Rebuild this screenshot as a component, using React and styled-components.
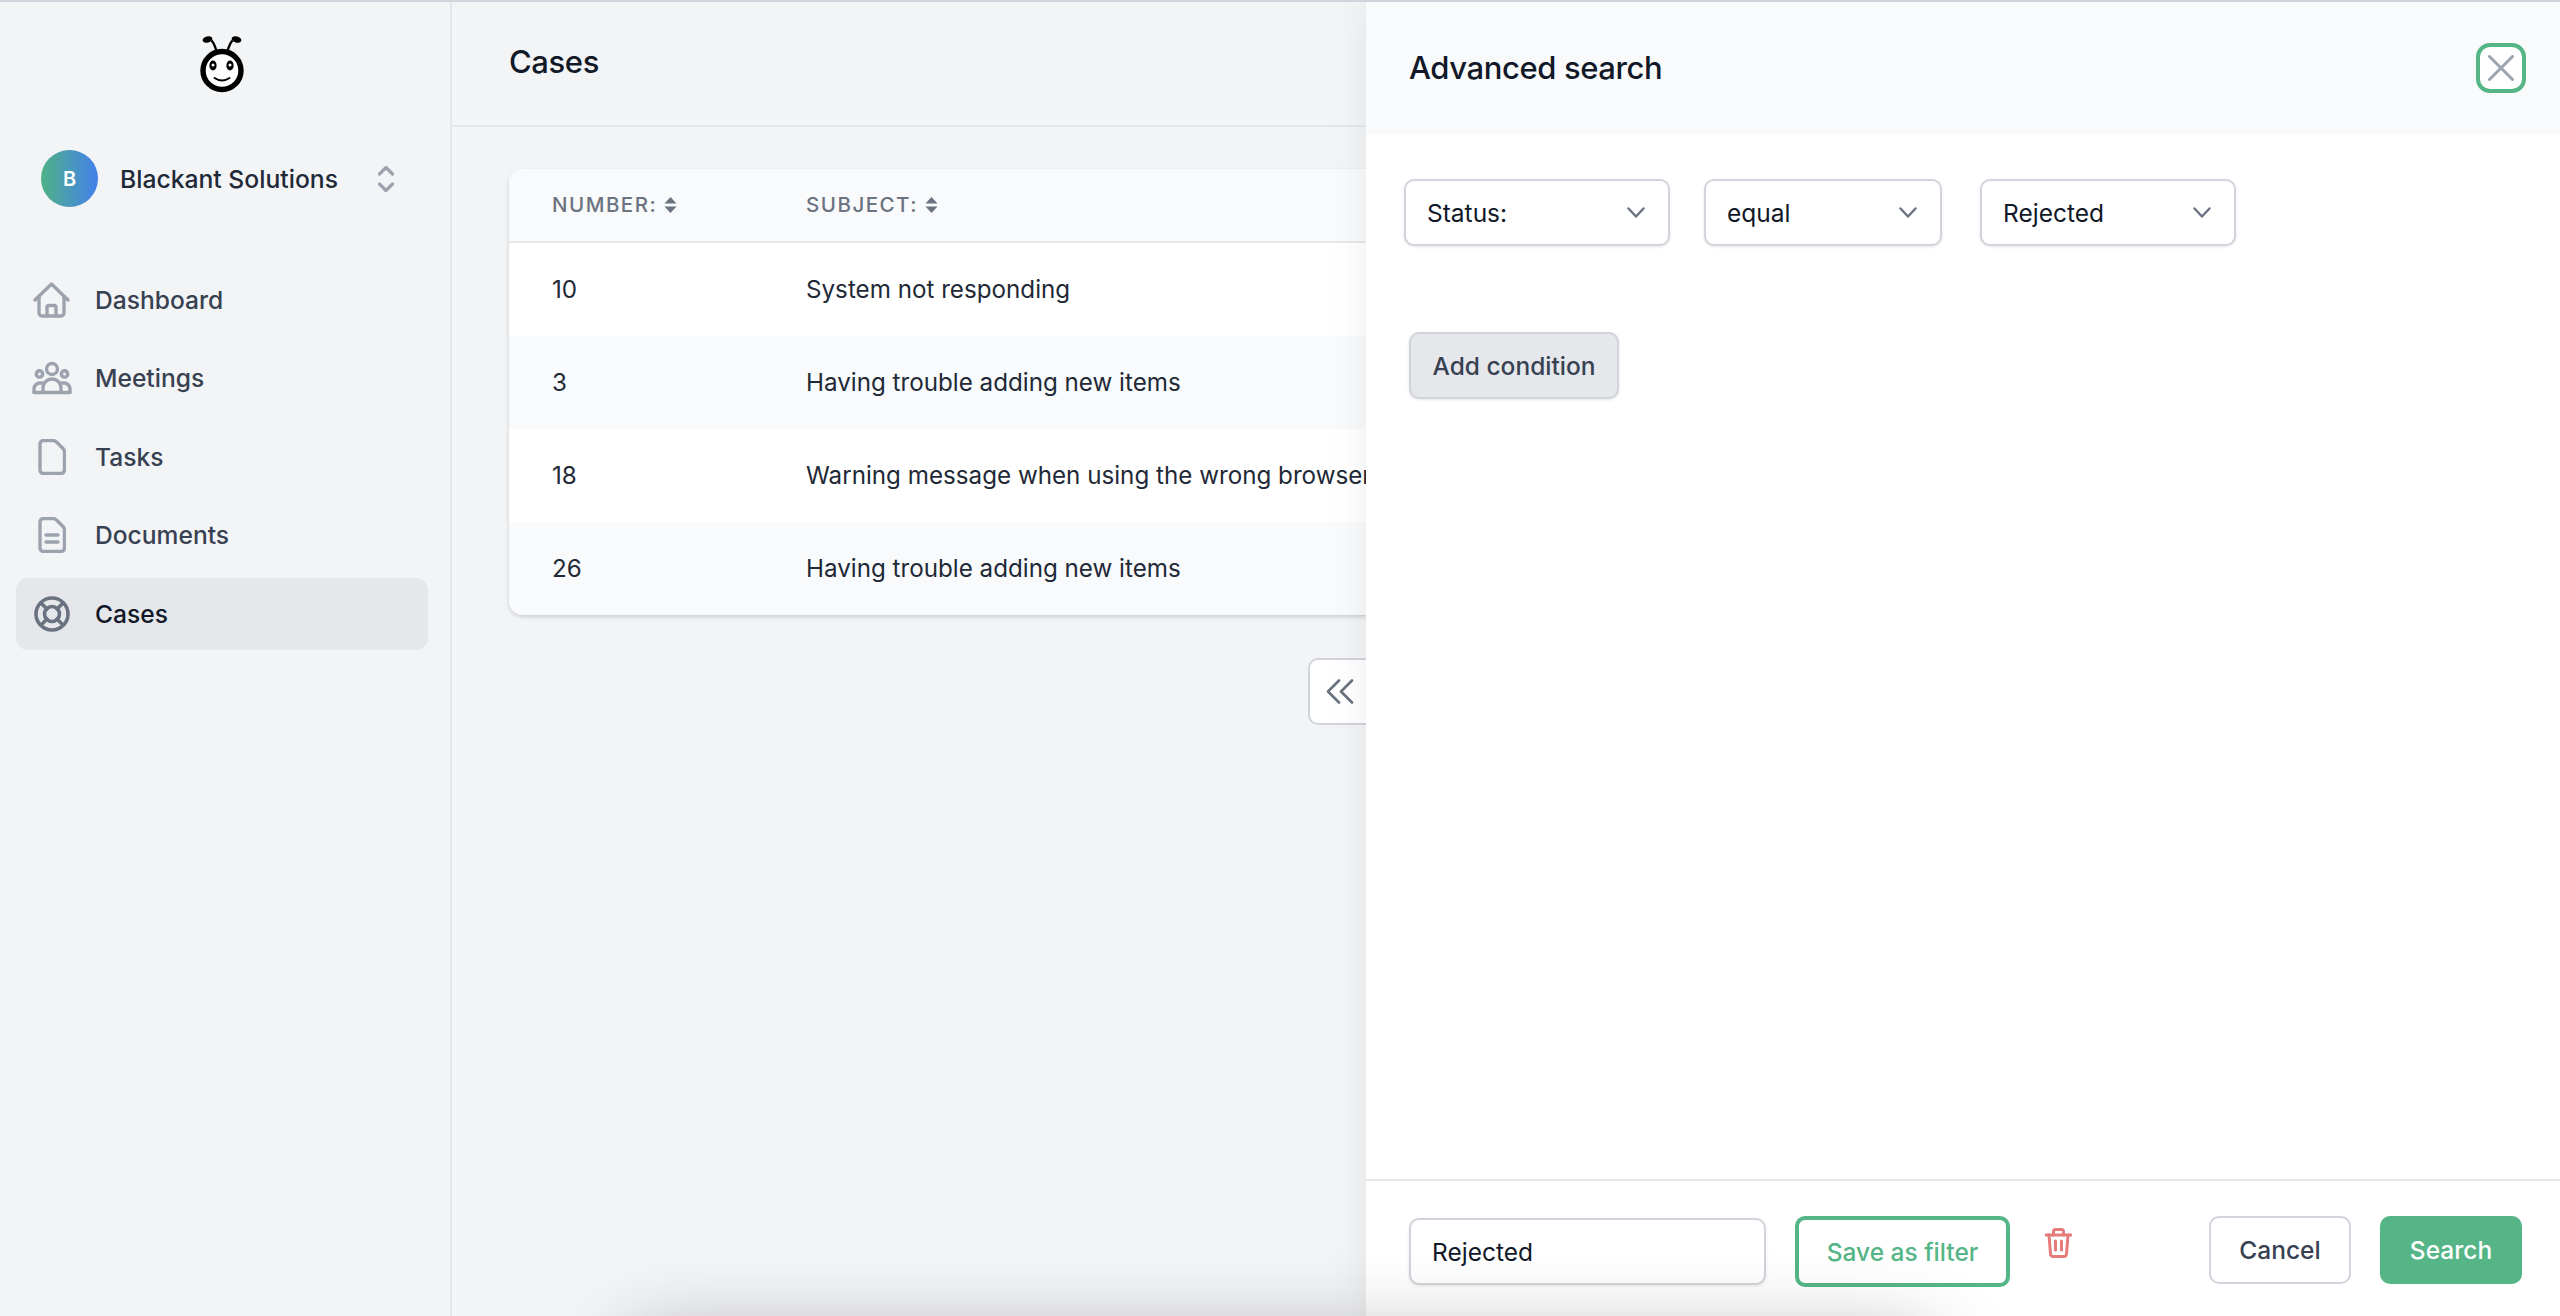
import React from 'react'
import styled, { createGlobalStyle } from 'styled-components'

const Global = createGlobalStyle`
  html, body { margin: 0; padding: 0; height: 100%; }
  body { font-family: Inter, "Liberation Sans", sans-serif; background: #f3f4f6; color: #111827; }
  #root { height: 100%; }
  * { box-sizing: border-box; }
`

const Page = styled.div`
  position: relative;
  display: flex;
  height: 1316px;
  overflow: hidden;
  border-top: 2px solid #d1d5db;
  background: #f3f4f6;
`
const Sidebar = styled.aside`
  width: 452px;
  flex: none;
  padding: 32px 22px 0 16px;
  border-right: 2px solid #e5e7eb;
`
const LogoWrap = styled.div`
  display: flex;
  justify-content: center;
`
const Org = styled.div`
  display: flex;
  align-items: center;
  height: 57px;
  margin-top: 57px;
  padding-left: 25px;
`
const Avatar = styled.div`
  width: 57px;
  height: 57px;
  border-radius: 50%;
  display: flex;
  align-items: center;
  justify-content: center;
  background: linear-gradient(90deg, #4fb286, #4380ec);
  color: #fff;
  font-size: 20px;
  font-weight: 600;
`
const OrgName = styled.span`
  margin-left: 22px;
  font-size: 24.7px;
  font-weight: 500;
  color: #1f2937;
`
const OrgToggle = styled.svg`
  margin-left: 40px;
  color: #9ca3af;
`
const Nav = styled.nav`
  display: flex;
  flex-direction: column;
  gap: 6.4px;
  margin-top: 57px;
`
const NavItem = styled.a`
  display: flex;
  align-items: center;
  height: 72px;
  border-radius: 12px;
  font-size: 24.6px;
  font-weight: 500;
  color: ${p => (p.$active ? '#111827' : '#374151')};
  background: ${p => (p.$active ? '#e5e7eb' : 'transparent')};
`
const NavIconBox = styled.span`
  display: flex;
  justify-content: center;
  width: 79px;
  flex: none;
  padding-right: 8px;
  color: ${p => (p.$active ? '#6b7280' : '#9ca3af')};
`
const Main = styled.main`
  flex: 1;
  min-width: 0;
`
const MainHeader = styled.header`
  height: 125px;
  padding: 0 0 4px 57px;
  display: flex;
  align-items: center;
  border-bottom: 2px solid #e5e7eb;
`
const Title = styled.h1`
  margin: 0;
  font-size: 31px;
  font-weight: 500;
  letter-spacing: -0.4px;
  color: #111827;
`
const Table = styled.div`
  margin: 42px 50px 0 57px;
  border-radius: 14px;
  overflow: hidden;
  background: #fff;
  box-shadow: 0 2px 4px rgba(0, 0, 0, 0.16);
`
const Row = styled.div`
  display: grid;
  grid-template-columns: 254px 1fr;
  align-items: center;
  padding-left: 43px;
  height: 93px;
  padding-bottom: 1px;
  font-size: 24.2px;
  color: #1f2937;
  background: ${p => (p.$odd ? '#f9fafb' : '#fff')};
`
const HeadRow = styled(Row)`
  height: 74px;
  background: #f9fafb;
  border-bottom: 2px solid #e5e7eb;
  font-size: 20.5px;
  font-weight: 500;
  letter-spacing: 1.5px;
  color: #6b7280;
  text-transform: uppercase;
`
const HeadCell = styled.span`
  display: flex;
  align-items: center;
  gap: 7px;
`
const Pager = styled.div`
  display: flex;
  justify-content: center;
  margin-top: 43px;
`
const PagerGroup = styled.div`
  width: 396px;
`
const PageButton = styled.button`
  display: flex;
  align-items: center;
  justify-content: center;
  width: 90px;
  height: 67px;
  padding: 0 26px 0 0;
  background: #fff;
  border: 2px solid #d1d5db;
  border-radius: 10px 0 0 10px;
  color: #6b7280;
`
const Panel = styled.section`
  position: absolute;
  top: 0;
  right: 0;
  bottom: 0;
  width: 1194px;
  display: flex;
  flex-direction: column;
  background: #fff;
  box-shadow: 0 0 40px rgba(0, 0, 0, 0.07);
`
const PanelHeader = styled.div`
  height: 133px;
  flex: none;
  display: flex;
  align-items: center;
  justify-content: space-between;
  padding: 0 34px 2px 43px;
  background: #f9fafb;
`
const PanelTitle = styled.h2`
  margin: 0;
  font-size: 31px;
  font-weight: 500;
  letter-spacing: -0.4px;
  color: #111827;
`
const CloseButton = styled.button`
  display: flex;
  align-items: center;
  justify-content: center;
  width: 50px;
  height: 50px;
  padding: 0;
  background: #fff;
  border: 4px solid #55b586;
  border-radius: 14px;
  color: #9ca3af;
`
const PanelBody = styled.div`
  flex: 1;
  padding: 44px 0 0 38px;
`
const Conditions = styled.div`
  display: flex;
`
const Select = styled.div`
  display: flex;
  align-items: center;
  justify-content: space-between;
  width: ${p => p.$w}px;
  height: 67px;
  margin-right: ${p => p.$gap || 0}px;
  padding: 0 23px 0 21px;
  background: #fff;
  border: 2px solid #d1d5db;
  border-radius: 10px;
  box-shadow: 0 1px 3px rgba(0, 0, 0, 0.1);
  font-size: 24.5px;
  color: #111827;
`
const SelectArrow = styled.svg`
  color: #6b7280;
`
const AddButton = styled.button`
  display: block;
  width: 210px;
  height: 67px;
  margin: 86px 0 0 5px;
  padding: 0;
  background: #e5e7eb;
  border: 2px solid #d1d5db;
  border-radius: 10px;
  box-shadow: 0 1px 3px rgba(0, 0, 0, 0.1);
  font: 500 24.5px Inter, sans-serif;
  color: #374151;
`
const Footer = styled.div`
  height: 137px;
  flex: none;
  display: flex;
  align-items: flex-start;
  padding: 35px 38px 0 43px;
  border-top: 2px solid #e5e7eb;
`
const NameInput = styled.input`
  width: 357px;
  height: 67px;
  margin-top: 2px;
  padding: 0 21px;
  background: #fff;
  border: 2px solid #d1d5db;
  border-radius: 10px;
  box-shadow: 0 1px 3px rgba(0, 0, 0, 0.1);
  font: 400 24.5px Inter, sans-serif;
  color: #111827;
`
const SaveButton = styled.button`
  width: 215px;
  height: 71px;
  margin-left: 29px;
  padding: 0;
  background: #fff;
  border: 4px solid #55b586;
  border-radius: 10px;
  font: 500 24.5px Inter, sans-serif;
  color: #55b586;
`
const TrashBox = styled.span`
  margin: 12px 0 0 35px;
  color: #e57b7b;
`
const CancelButton = styled.button`
  width: 142px;
  height: 68px;
  margin-left: auto;
  padding: 0;
  background: #fff;
  border: 2px solid #d1d5db;
  border-radius: 10px;
  font: 500 24.5px Inter, sans-serif;
  color: #374151;
`
const SearchButton = styled.button`
  width: 142px;
  height: 68px;
  margin-left: 29px;
  padding: 0;
  background: #55b586;
  border: 0;
  border-radius: 10px;
  font: 500 24.5px Inter, sans-serif;
  color: #fff;
`
// shadow of the dialog that sits just under the fold
const FoldShadow = styled.div`
  position: absolute;
  top: 1345px;
  left: 640px;
  width: 1280px;
  height: 100px;
  box-shadow: 0 0 80px 10px rgba(0, 0, 0, 0.3);
  pointer-events: none;
`

const Logo = () => (
  <svg width="46" height="59" viewBox="0 0 46 59">
    <path d="M12.5 6.5 C15 9 16 12 17.5 17" fill="none" stroke="#000" strokeWidth="2.4" />
    <path d="M33.5 6.5 C31 9 30 12 28.5 17" fill="none" stroke="#000" strokeWidth="2.4" />
    <ellipse cx="8.5" cy="5.5" rx="5" ry="3" fill="#000" transform="rotate(-15 8.5 5.5)" />
    <ellipse cx="37.5" cy="5.5" rx="5" ry="3" fill="#000" transform="rotate(15 37.5 5.5)" />
    <circle cx="23" cy="36.5" r="19" fill="#fff" stroke="#000" strokeWidth="5.4" />
    <ellipse cx="14" cy="31.5" rx="3.6" ry="5" fill="#000" />
    <ellipse cx="31" cy="31.5" rx="3.6" ry="5" fill="#000" />
    <circle cx="14" cy="31" r="1.5" fill="#fff" />
    <circle cx="31" cy="31" r="1.5" fill="#fff" />
    <path d="M15.5 44 Q23 49 30.5 44" fill="none" stroke="#000" strokeWidth="2" strokeLinecap="round" />
  </svg>
)

const line = { fill: 'none', stroke: 'currentColor', strokeWidth: 3.4, strokeLinecap: 'round', strokeLinejoin: 'round' }

const HomeIcon = () => (
  <svg width="37" height="36" viewBox="0 0 37 36" {...line}>
    <path d="M2 18 L18.5 2 L35 18" />
    <path d="M6 14.5 V31 a3 3 0 0 0 3 3 H28 a3 3 0 0 0 3 -3 V14.5" />
    <path d="M14 34 V25.5 a2 2 0 0 1 2 -2 h5 a2 2 0 0 1 2 2 V34" />
  </svg>
)
const PeopleIcon = () => (
  <svg width="40" height="34" viewBox="0 0 40 34" {...line}>
    <circle cx="20" cy="8" r="5.5" />
    <circle cx="7.5" cy="13" r="3.2" />
    <circle cx="32.5" cy="13" r="3.2" />
    <path d="M11 31 V27 a9 9 0 0 1 18 0 V31" />
    <path d="M2 31 V28 a6 6 0 0 1 6 -6 h3" />
    <path d="M38 31 V28 a6 6 0 0 0 -6 -6 h-3" />
    <path d="M2 31.5 H38" />
  </svg>
)
const docPath = 'M5.5 1.5 H15 Q17 1.5 18.5 3 L25 9.5 Q26.5 11 26.5 13 V31 a3.5 3.5 0 0 1 -3.5 3.5 H5.5 A3.5 3.5 0 0 1 2 31 V5 A3.5 3.5 0 0 1 5.5 1.5 Z'
const DocIcon = () => (
  <svg width="28" height="36" viewBox="0 0 28 36" {...line}>
    <path d={docPath} />
  </svg>
)
const DocLinesIcon = () => (
  <svg width="28" height="36" viewBox="0 0 28 36" {...line}>
    <path d={docPath} />
    <path d="M8 18 H20" />
    <path d="M8 25 H20" />
  </svg>
)
const BuoyIcon = () => (
  <svg width="36" height="36" viewBox="0 0 36 36" {...line} strokeWidth="3.6">
    <circle cx="18" cy="18" r="16" />
    <circle cx="18" cy="18" r="7.5" />
    <path d="M7 7 L13 13 M29 7 L23 13 M7 29 L13 23 M29 29 L23 23" />
  </svg>
)
const SortIcon = () => (
  <svg width="13" height="16" viewBox="0 0 13 16" fill="currentColor">
    <path d="M6.5 0 L12.5 6.5 H0.5 Z" />
    <path d="M6.5 16 L12.5 9.5 H0.5 Z" />
  </svg>
)
const Chevron = () => (
  <SelectArrow width="18" height="11" viewBox="0 0 18 11" fill="none" stroke="currentColor" strokeWidth="2.4" strokeLinecap="round" strokeLinejoin="round">
    <path d="M1.5 1.5 L9 9.5 L16.5 1.5" />
  </SelectArrow>
)
const TrashIcon = () => (
  <svg width="27" height="30" viewBox="0 0 27 30" {...line} strokeWidth="3">
    <path d="M1 7 H26" />
    <path d="M8.5 7 V3.5 a2 2 0 0 1 2 -2 h6 a2 2 0 0 1 2 2 V7" />
    <path d="M4 7 L5.5 26 a2.5 2.5 0 0 0 2.5 2.5 h11 a2.5 2.5 0 0 0 2.5 -2.5 L23 7" />
    <path d="M10.5 13 V22 M16.5 13 V22" />
  </svg>
)

const navItems = [
  { label: 'Dashboard', Icon: HomeIcon },
  { label: 'Meetings', Icon: PeopleIcon },
  { label: 'Tasks', Icon: DocIcon },
  { label: 'Documents', Icon: DocLinesIcon },
  { label: 'Cases', Icon: BuoyIcon, active: true },
]

const cases = [
  { num: 10, subject: 'System not responding' },
  { num: 3, subject: 'Having trouble adding new items' },
  { num: 18, subject: 'Warning message when using the wrong browser' },
  { num: 26, subject: 'Having trouble adding new items' },
]

const App = () => {
  return (
    <Page>
      <Global />
      <Sidebar>
        <LogoWrap><Logo /></LogoWrap>
        <Org>
          <Avatar>B</Avatar>
          <OrgName>Blackant Solutions</OrgName>
          <OrgToggle width="16" height="26" viewBox="0 0 16 26" fill="none" stroke="currentColor" strokeWidth="3.2" strokeLinecap="round" strokeLinejoin="round">
            <path d="M1.5 8 L8 1.5 L14.5 8" />
            <path d="M1.5 18 L8 24.5 L14.5 18" />
          </OrgToggle>
        </Org>
        <Nav>
          {navItems.map(({ label, Icon, active }) => (
            <NavItem key={label} $active={active}>
              <NavIconBox $active={active}><Icon /></NavIconBox>
              {label}
            </NavItem>
          ))}
        </Nav>
      </Sidebar>

      <Main>
        <MainHeader><Title>Cases</Title></MainHeader>
        <Table>
          <HeadRow>
            <HeadCell>Number: <SortIcon /></HeadCell>
            <HeadCell>Subject: <SortIcon /></HeadCell>
          </HeadRow>
          {cases.map((c, i) => (
            <Row key={c.num} $odd={i % 2 === 1}>
              <span>{c.num}</span>
              <span>{c.subject}</span>
            </Row>
          ))}
        </Table>
        <Pager>
          <PagerGroup>
            <PageButton>
              <svg width="28" height="25" viewBox="0 0 28 25" fill="none" stroke="currentColor" strokeWidth="2.6" strokeLinecap="round" strokeLinejoin="round">
                <path d="M13 1.5 L2 12.5 L13 23.5" />
                <path d="M26 1.5 L15 12.5 L26 23.5" />
              </svg>
            </PageButton>
          </PagerGroup>
        </Pager>
      </Main>

      <Panel>
        <PanelHeader>
          <PanelTitle>Advanced search</PanelTitle>
          <CloseButton>
            <svg width="26" height="26" viewBox="0 0 26 26" fill="none" stroke="currentColor" strokeWidth="3" strokeLinecap="round">
              <path d="M1.5 1.5 L24.5 24.5 M24.5 1.5 L1.5 24.5" />
            </svg>
          </CloseButton>
        </PanelHeader>
        <PanelBody>
          <Conditions>
            <Select $w={266} $gap={34}>Status:<Chevron /></Select>
            <Select $w={238} $gap={38}>equal<Chevron /></Select>
            <Select $w={256}>Rejected<Chevron /></Select>
          </Conditions>
          <AddButton>Add condition</AddButton>
        </PanelBody>
        <Footer>
          <NameInput defaultValue="Rejected" />
          <SaveButton>Save as filter</SaveButton>
          <TrashBox><TrashIcon /></TrashBox>
          <CancelButton>Cancel</CancelButton>
          <SearchButton>Search</SearchButton>
        </Footer>
      </Panel>
      <FoldShadow />
    </Page>
  )
}

export default App
